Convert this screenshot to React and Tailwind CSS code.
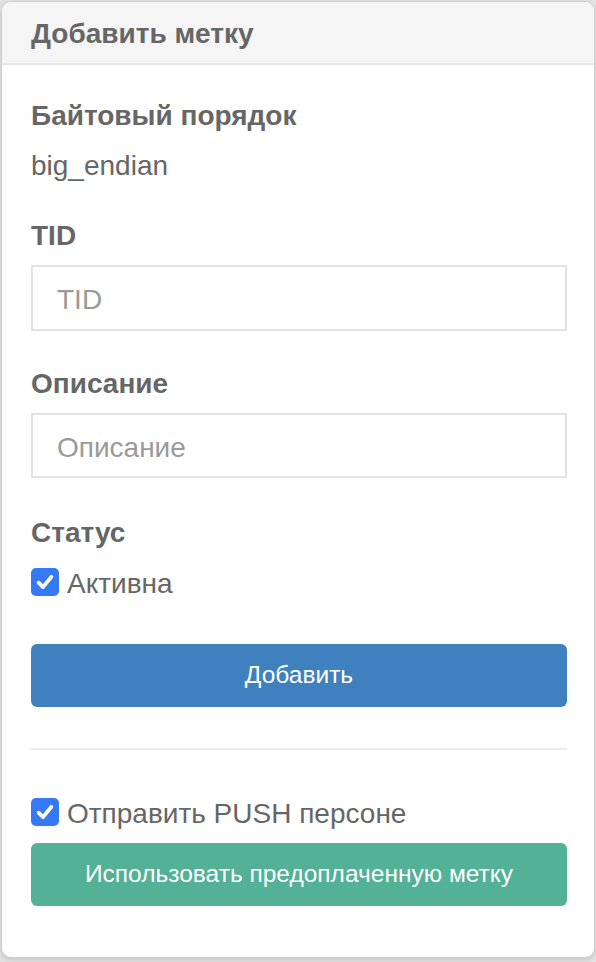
import React from "react";

function Check() {
  return (
    <div className="w-[28px] h-[28px] rounded-[5px] bg-[#3579f6] flex items-center justify-center shrink-0">
      <svg width="22" height="22" viewBox="0 0 20 20" fill="none">
        <path d="M4.2 10.6 L8.2 14.6 L15.8 5.2" stroke="white" strokeWidth="3.4" strokeLinecap="round" strokeLinejoin="round" />
      </svg>
    </div>
  );
}

export default function App() {
  const font = { fontFamily: '"Liberation Sans", Arial, sans-serif' };
  return (
    <div className="w-[596px] h-[962px] bg-[#e4e4e4] pt-[1px] pl-[1px] overflow-hidden" style={font}>
      <div className="w-[594px] h-[957px] bg-white rounded-[10px] border border-[#cfcfcf] shadow-[0_2px_6px_rgba(0,0,0,0.15)] overflow-hidden flex flex-col">
        <div className="h-[63px] bg-[#f5f5f5] border-b-2 border-[#e6e6e6] px-[29px] flex items-center">
          <h4 className="text-[28px] leading-[31px] font-bold text-[#666] pt-[2px]">Добавить метку</h4>
        </div>
        <div className="pl-[29px] pr-[27px] pt-[35px] flex flex-col text-[#666]">
          <div className="text-[28px] leading-[31px] font-bold">Байтовый порядок</div>
          <div className="text-[28px] leading-[31px] mt-[19px]">big_endian</div>
          <div className="text-[28px] leading-[31px] font-bold mt-[39px]">TID</div>
          <div className="mt-[14px] h-[66px] border-2 border-[#e3e3e3] flex items-center px-[24px]">
            <span className="text-[28px] leading-[31px] text-[#9a9a9a] pt-[3px]">TID</span>
          </div>
          <div className="text-[28px] leading-[31px] font-bold mt-[37px]">Описание</div>
          <div className="mt-[14px] h-[65px] border-2 border-[#e3e3e3] flex items-center px-[24px]">
            <span className="text-[28px] leading-[31px] text-[#9a9a9a] pt-[3px]">Описание</span>
          </div>
          <div className="text-[28px] leading-[31px] font-bold mt-[39px]">Статус</div>
          <div className="mt-[20px] flex items-start gap-[8px]">
            <Check />
            <span className="text-[28px] leading-[31px]">Активна</span>
          </div>
          <button className="mt-[45px] h-[63px] w-full rounded-[6px] bg-[#3f81bf] text-white text-[24.5px] flex items-center justify-center">
            Добавить
          </button>
          <div className="mt-[41px] h-[2px] bg-[#ececec]" />
          <div className="mt-[48px] flex items-start gap-[8px]">
            <Check />
            <span className="text-[28px] leading-[31px]">Отправить PUSH персоне</span>
          </div>
          <button className="mt-[14px] h-[63px] w-full rounded-[6px] bg-[#53b196] text-white text-[24.5px] flex items-center justify-center">
            Использовать предоплаченную метку
          </button>
        </div>
      </div>
    </div>
  );
}
